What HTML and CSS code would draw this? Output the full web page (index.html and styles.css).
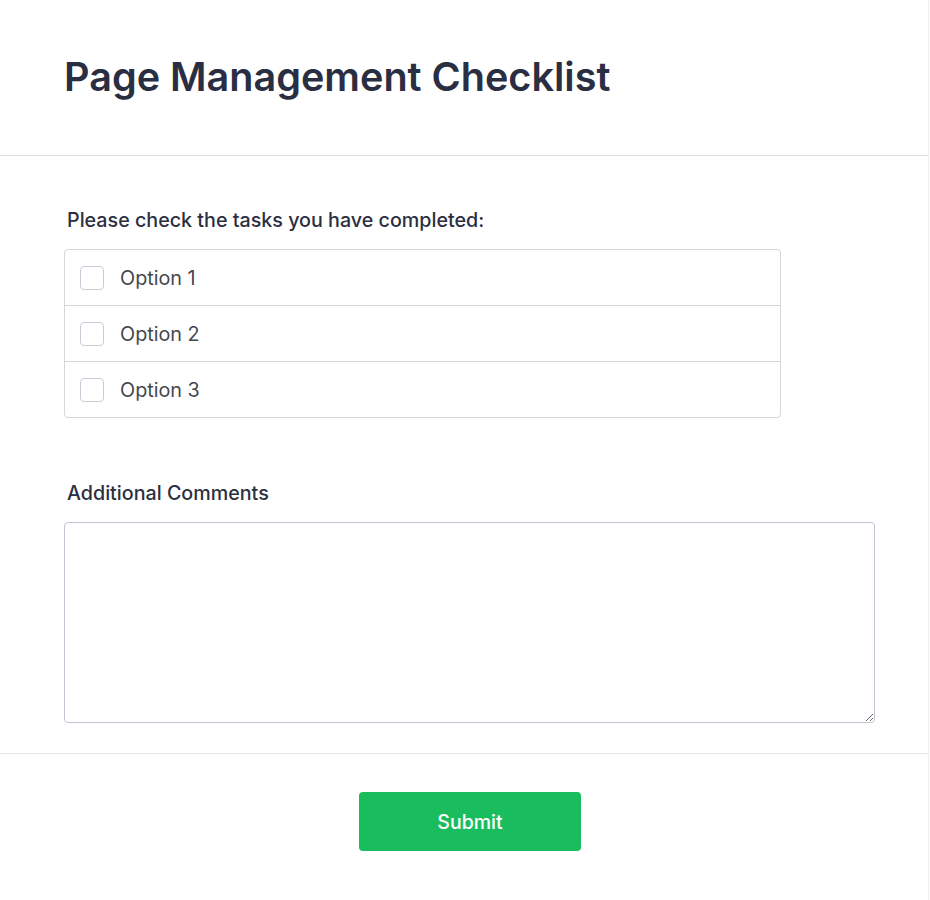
FILE: index.html
```html
<!DOCTYPE html>
<html lang="en">
<head>
<meta charset="utf-8">
<title>Page Management Checklist</title>
<link rel="stylesheet" href="styles.css">
</head>
<body>
<div class="card">
  <header class="header">
    <h1 class="title">Page Management Checklist</h1>
  </header>
  <main class="body">
    <div class="field">
      <div class="label">Please check the tasks you have completed:</div>
      <div class="options">
        <label class="option"><span class="box"></span><span class="opt-text">Option 1</span></label>
        <label class="option"><span class="box"></span><span class="opt-text">Option 2</span></label>
        <label class="option"><span class="box"></span><span class="opt-text">Option 3</span></label>
      </div>
    </div>
    <div class="field comments">
      <div class="label">Additional Comments</div>
      <textarea class="textarea"></textarea>
    </div>
  </main>
  <footer class="footer">
    <button class="submit" type="button">Submit</button>
  </footer>
</div>
</body>
</html>
```
FILE: styles.css
```css
html, body {
  margin: 0;
  padding: 0;
  background: #ffffff;
}
body {
  font-family: Inter, "Noto Sans", sans-serif;
  color: #2b2f3f;
}
.card {
  width: 929px;
  min-height: 900px;
  border-right: 1px solid #f0f0f3;
  box-sizing: border-box;
}
.header {
  height: 156px;
  box-sizing: border-box;
  border-bottom: 1px solid #dcdde3;
  padding: 52px 0 0 64px;
}
.title {
  margin: 0;
  font-size: 39.6px;
  font-weight: 600;
  line-height: 50px;
  color: #2a2e42;
}
.body {
  padding: 50px 0 30px 64px;
  border-bottom: 1px solid #e6e7ec;
}
.label {
  font-size: 19.7px;
  font-weight: 500;
  line-height: 24px;
  color: #2b2f3f;
  margin: 2px 0 17px 3px;
}
.options {
  width: 717px;
  box-sizing: border-box;
  border: 1px solid #d4d6dc;
  border-radius: 4px;
}
.option {
  display: flex;
  align-items: center;
  height: 56px;
  padding-left: 15px;
  border-top: 1px solid #d4d6dc;
  box-sizing: border-box;
}
.option:first-child {
  border-top: none;
  height: 55px;
}
.box {
  width: 24px;
  height: 24px;
  box-sizing: border-box;
  border: 1px solid #c9ccd6;
  border-radius: 4px;
  background: #fff;
  margin-right: 16px;
}
.opt-text {
  font-size: 19.8px;
  color: #45474f;
  line-height: 24px;
}
.comments {
  margin-top: 63px;
}
.comments .label {
  margin-bottom: 17px;
}
.textarea {
  display: block;
  width: 811px;
  height: 201px;
  box-sizing: border-box;
  border: 1px solid #c3c6d2;
  border-radius: 4px;
  font-family: inherit;
  font-size: 16px;
  resize: vertical;
  margin: 0;
  padding: 10px;
}
.footer {
  display: flex;
  justify-content: center;
  padding-top: 38px;
}
.submit {
  width: 222px;
  height: 59px;
  margin-left: 12px;
  border: none;
  border-radius: 4px;
  background: #1abd5e;
  color: #ffffff;
  font-family: inherit;
  font-size: 19.5px;
  font-weight: 500;
}
```
